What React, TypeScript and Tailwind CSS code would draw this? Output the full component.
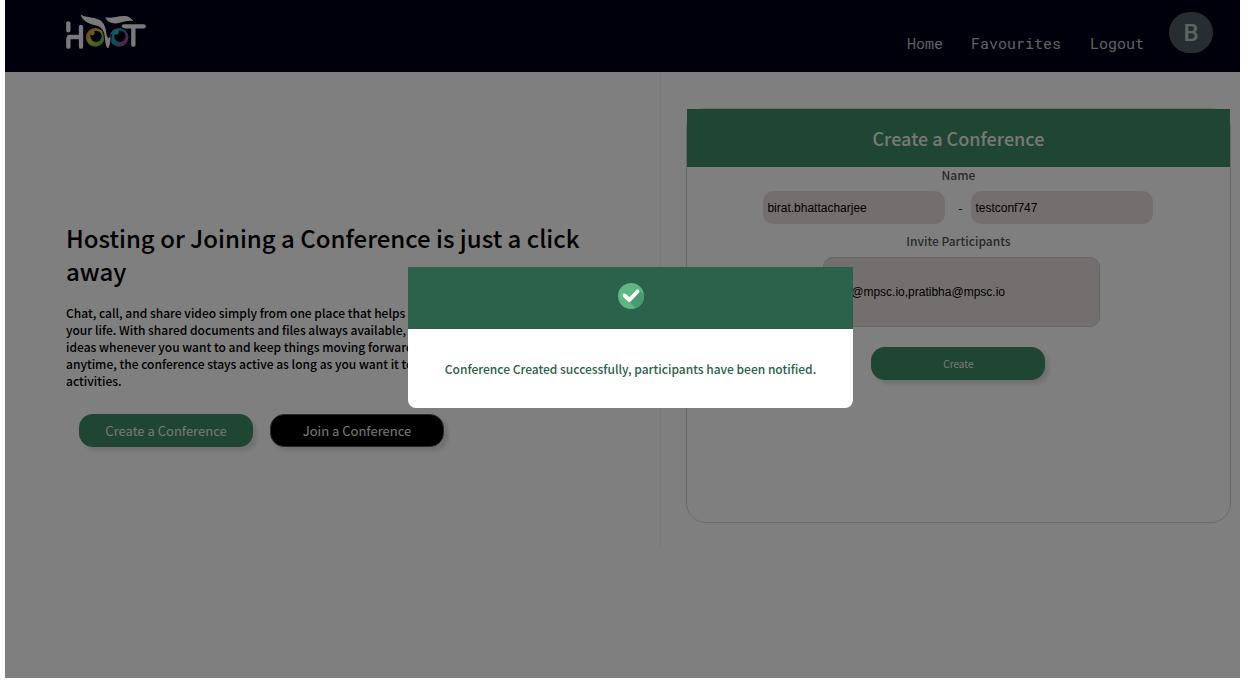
import React from "react";

const sans = "font-['Noto_Sans_CJK_SC',sans-serif]";

function Logo() {
  return (
    <svg viewBox="45 24 246 108" className="h-9 w-[82px]" role="img" aria-label="Hoot">
      <defs>
        <linearGradient id="left-eye" x1="0" y1="0.1" x2="0.9" y2="1">
          <stop offset="0" stopColor="#d89a30" />
          <stop offset="0.5" stopColor="#c8cc30" />
          <stop offset="1" stopColor="#30b040" />
        </linearGradient>
        <linearGradient id="right-eye" x1="0" y1="0.2" x2="1" y2="0.9">
          <stop offset="0" stopColor="#28b8b8" />
          <stop offset="0.5" stopColor="#3088b0" />
          <stop offset="0.75" stopColor="#9850a0" />
          <stop offset="1" stopColor="#c04078" />
        </linearGradient>
      </defs>
      <g stroke="#f4f4f4" strokeWidth="13" strokeLinecap="round" fill="none">
        <line x1="55" y1="55" x2="55" y2="76" />
        <line x1="55" y1="102" x2="55" y2="125" />
        <line x1="57" y1="96" x2="92" y2="96" />
        <line x1="93" y1="66" x2="93" y2="125" />
        <line x1="222" y1="64" x2="281" y2="64" />
        <line x1="250" y1="66" x2="250" y2="119" />
      </g>
      <circle cx="136" cy="97" r="31" fill="#00001a" />
      <circle cx="207" cy="97" r="31" fill="#00001a" />
      <circle cx="136" cy="97" r="28" fill="url(#left-eye)" />
      <circle cx="138" cy="94" r="17" fill="#00001a" />
      <circle cx="127" cy="84" r="7" fill="#ccb838" />
      <circle cx="207" cy="97" r="28" fill="url(#right-eye)" />
      <circle cx="210" cy="94" r="17" fill="#00001a" />
      <circle cx="199" cy="82" r="7" fill="#38b0b8" />
      <path
        d="M89 26C105 37 130 33 148 43C163 51 168 66 170 82C171 92 173 98 176 98C179 98 181 94 184 88C182 104 184 120 174 133C164 122 165 112 163 98C161 78 156 67 138 63C113 58 95 47 89 26Z"
        fill="#f4f4f4"
        stroke="#00001a"
        strokeWidth="3"
      />
      <path d="M166 37C184 42 202 32 224 33C236 33 244 39 250 48C234 45 222 50 206 54C188 58 172 52 166 37Z" fill="#f4f4f4" />
    </svg>
  );
}

function SuccessIcon() {
  return (
    <svg viewBox="0 0 26 26" className="size-[26px]" aria-hidden="true">
      <defs>
        <clipPath id="badge">
          <circle cx="13" cy="13" r="13" />
        </clipPath>
      </defs>
      <circle cx="13" cy="13" r="13" fill="#5fb783" />
      <path d="M21 7L32 18L22 30L11 18Z" fill="#469b72" clipPath="url(#badge)" />
      <path d="M6.5 12.5L11.5 17L19.5 8.5" fill="none" stroke="#ffffff" strokeWidth="4" strokeLinecap="round" strokeLinejoin="round" />
    </svg>
  );
}

const action =
  "h-[33px] w-[174px] rounded-[14px] text-[#f0f0f0] shadow-[4px_4px_4px_rgba(0,0,0,0.12)]";
const field =
  "rounded-[10px] bg-[#e9dfdf] px-1 text-xs text-black font-['Liberation_Sans',sans-serif]";

export default function App() {
  return (
    <div className={`${sans} flex min-h-screen bg-white pr-3 pb-0.5 pl-[5px]`}>
      <div className="relative flex-1">
        <header className="flex h-[72px] items-start justify-between bg-[#000018] pr-[27px] pl-[60px]">
          <a href="#home" className="mt-[13px]">
            <Logo />
          </a>
          <nav className="flex items-start text-[15px] leading-5 font-['Roboto_Mono','Liberation_Mono',monospace] text-[#c4c4c4]">
            <a href="#home" className="mt-[33px] mr-7">Home</a>
            <a href="#favourites" className="mt-[33px] mr-[29px]">Favourites</a>
            <a href="#logout" className="mt-[33px] mr-[25px]">Logout</a>
            <span className="mt-3 flex h-[41px] w-11 items-center justify-center rounded-full bg-[#4d5c62] text-2xl font-medium font-['Roboto',sans-serif]">
              B
            </span>
          </nav>
        </header>

        <main className="grid grid-cols-[531fr_469fr]">
          <section className="min-h-[475px] border-r border-[#f0f0f0] pt-[149px] pr-16 pl-[61px]">
            <h1 className="text-2xl leading-[33px] font-medium">
              Hosting or Joining a Conference is just a click away
            </h1>
            <p className="mt-[17px] text-xs leading-[17px] font-medium">
              Chat, call, and share video simply from one place that helps you
              <br />
              your life. With shared documents and files always available,
              <br />
              ideas whenever you want to and keep things moving forward
              <br />
              anytime, the conference stays active as long as you want it to
              <br />
              activities.
            </p>
            <div className="mt-[25px] ml-[13px] flex gap-[17px] text-[13px]">
              <button type="button" className={`${action} bg-[#3e8a66]`}>Create a Conference</button>
              <button type="button" className={`${action} border border-[#555] bg-black`}>Join a Conference</button>
            </div>
          </section>

          <section className="pt-9 pr-[9px] pl-[25px]">
            <form className="flex h-[415px] flex-col items-center rounded-[20px] border border-[#d4d4d4]">
              <h2 className="flex h-[58px] shrink-0 items-center justify-center self-stretch bg-[#3e8a66] text-lg font-medium text-[#f0f0f0]">
                Create a Conference
              </h2>
              <label htmlFor="conference" className="text-xs leading-4 font-medium text-[#555]">
                Name
              </label>
              <div className="mt-2 flex items-center text-xs">
                <input aria-label="Host" defaultValue="birat.bhattacharjee" className={`${field} h-[33px] w-[182px]`} />
                <span className="w-[26px] pl-1 text-center">-</span>
                <input id="conference" defaultValue="testconf747" className={`${field} h-[33px] w-[182px]`} />
              </div>
              <label htmlFor="participants" className="mt-[9px] text-xs leading-4 font-medium text-[#555]">
                Invite Participants
              </label>
              <input
                id="participants"
                defaultValue="birat@mpsc.io,pratibha@mpsc.io"
                className={`${field} mt-2 ml-1.5 h-[70px] w-[277px] border border-[#ccc]`}
              />
              <button type="button" className={`${action} mt-5 bg-[#3e8a66] text-[10px]`}>Create</button>
            </form>
          </section>
        </main>

        <div className="absolute inset-0 flex items-center justify-center bg-black/50 pb-1 pl-4">
          <div role="dialog" aria-label="Conference created" className="overflow-hidden rounded-b-lg bg-white">
            <div className="flex h-[62px] items-center justify-center bg-[#2c614b] pb-1">
              <SuccessIcon />
            </div>
            <p className="w-[445px] py-8 text-center text-xs leading-[15px] font-medium text-[#2c614b]">
              Conference Created successfully, participants have been notified.
            </p>
          </div>
        </div>
      </div>
    </div>
  );
}
